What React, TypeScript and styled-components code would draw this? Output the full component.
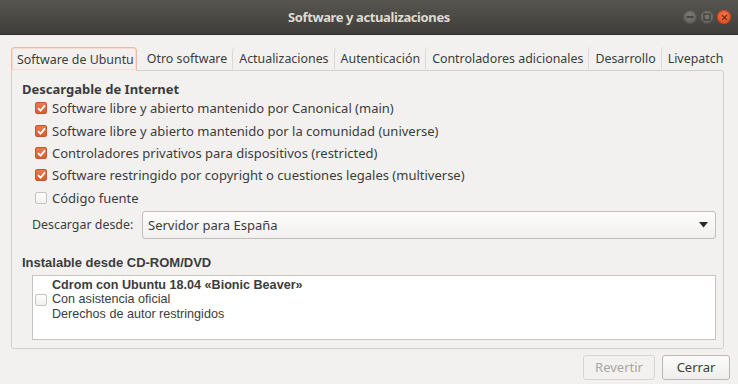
import React from "react";
import styled, { createGlobalStyle } from "styled-components";

const GlobalStyle = createGlobalStyle`
  html, body {
    margin: 0;
    padding: 0;
    background: #f2f1f0;
  }
  * {
    box-sizing: border-box;
  }
`;

const font = `"Noto Sans", "Open Sans", "DejaVu Sans", sans-serif`;
const narrowFont = `"Liberation Sans", Arial, sans-serif`;

const Window = styled.div`
  width: 738px;
  height: 384px;
  display: flex;
  flex-direction: column;
  background: #f2f1f0;
  font-family: ${font};
  font-size: 13px;
  color: #3c3c3c;
  overflow: hidden;
`;

const TitleBar = styled.div`
  height: 35px;
  flex: none;
  display: grid;
  grid-template-columns: 1fr auto 1fr;
  align-items: center;
  background: linear-gradient(to bottom, #57554f, #3f3e3a);
  border-bottom: 1px solid #2f2e2b;
  padding: 0 7px;
`;

const Title = styled.div`
  grid-column: 2;
  font-weight: 700;
  font-size: 13px;
  color: #dfdbd2;
  letter-spacing: -0.4px;
`;

const Controls = styled.div`
  grid-column: 3;
  justify-self: end;
  display: flex;
  gap: 3px;
`;

const CircleButton = styled.div<{ $close?: boolean }>`
  width: 14px;
  height: 14px;
  border-radius: 50%;
  display: flex;
  align-items: center;
  justify-content: center;
  background: ${({ $close }) =>
    $close
      ? "radial-gradient(circle at 50% 35%, #f2744a, #d9481a)"
      : "radial-gradient(circle at 50% 35%, #7a7873, #5d5c58)"};
  box-shadow: inset 0 0 0 1px ${({ $close }) => ($close ? "#c1431a" : "#4f4e4a")};
`;

const Body = styled.div`
  display: flex;
  flex-direction: column;
  padding: 11px 14px 0 11px;
`;

const TabRow = styled.div`
  display: flex;
  align-items: flex-end;
  height: 24px;
  position: relative;
  z-index: 1;
  font-size: 12.4px;
`;

const Tab = styled.div<{ $active?: boolean }>`
  height: ${({ $active }) => ($active ? "24px" : "22px")};
  display: flex;
  align-items: center;
  padding: ${({ $active }) => ($active ? "0 2px 0 5px" : "0 5px 0 6px")};
  margin-bottom: ${({ $active }) => ($active ? "-1px" : "1px")};
  white-space: nowrap;
  border: ${({ $active }) => ($active ? "1px solid #efb9a1" : "none")};
  border-bottom: ${({ $active }) => ($active ? "1px solid #f2f1f0" : "none")};
  border-radius: 4px 4px 0 0;
  background: #f2f1f0;
  box-shadow: ${({ $active }) => ($active ? "inset 0 0 0 1px #f7ddd1" : "none")};
  border-left: ${({ $active }) => ($active ? "1px solid #efb9a1" : "1px solid #dcd8d4")};
  &:nth-child(2) {
    border-left: none;
    margin-left: 4px;
  }
`;

const Panel = styled.div`
  height: 279px;
  border: 1px solid #d3cfcb;
  border-radius: 0 3px 3px 3px;
  padding: 9px 7px 0 10px;
  display: flex;
  flex-direction: column;
`;

const SectionTitle = styled.div<{ $narrow?: boolean }>`
  font-weight: 700;
  font-size: 13px;
  height: 18px;
  display: flex;
  align-items: center;
  font-family: ${({ $narrow }) => ($narrow ? narrowFont : font)};
`;

const CheckList = styled.div`
  display: flex;
  flex-direction: column;
  margin-top: -1px;
  padding-left: 13px;
`;

const CheckRow = styled.label`
  height: 22.4px;
  display: flex;
  align-items: center;
  gap: 5px;
`;

const Box = styled.span<{ $checked?: boolean }>`
  width: 12px;
  height: 12px;
  flex: none;
  border-radius: 2px;
  display: flex;
  align-items: center;
  justify-content: center;
  background: ${({ $checked }) =>
    $checked ? "linear-gradient(#ea7a4f, #db5d30)" : "linear-gradient(#ffffff, #f1f0ef)"};
  border: 1px solid ${({ $checked }) => ($checked ? "#c9542a" : "#c7c3bf")};
`;

const SourceRow = styled.div`
  display: flex;
  align-items: center;
  margin: 2px 0 0 10px;
`;

const SourceLabel = styled.span`
  width: 110px;
  flex: none;
  white-space: nowrap;
  font-size: 12.4px;
`;

const Combo = styled.div`
  flex: 1;
  height: 28px;
  border: 1px solid #c2beb9;
  border-radius: 3px;
  background: linear-gradient(#fcfcfc, #f1f0ef);
  display: flex;
  align-items: center;
  justify-content: space-between;
  padding: 0 7px 0 5px;
`;

const CdSection = styled.div`
  margin-top: 15px;
  display: flex;
  flex-direction: column;
`;

const CdBox = styled.div`
  margin: 3px 0 0 10px;
  height: 65px;
  background: #ffffff;
  border: 1px solid #c6c2bd;
  display: flex;
  align-items: flex-start;
  gap: 5px;
  padding: 2px 0 0 2px;
`;

const CdText = styled.div`
  display: flex;
  flex-direction: column;
  font-family: ${narrowFont};
  line-height: 14.5px;
  font-size: 12.6px;
`;

const CdBoxCell = styled.div`
  padding-top: 16px;
`;

const Footer = styled.div`
  flex: 1;
  display: flex;
  justify-content: flex-end;
  align-items: center;
  gap: 7px;
  padding: 1px 8px 0 0;
`;

const Button = styled.div<{ $disabled?: boolean }>`
  height: 25px;
  padding: 0 11px;
  min-width: 68px;
  display: flex;
  align-items: center;
  justify-content: center;
  border-radius: 3px;
  border: 1px solid ${({ $disabled }) => ($disabled ? "#d8d4d0" : "#bdb8b3")};
  background: ${({ $disabled }) =>
    $disabled ? "#f2f1f0" : "linear-gradient(#fbfbfb, #efeeed)"};
  color: ${({ $disabled }) => ($disabled ? "#a9a6a2" : "#3c3c3c")};
  font-size: 13px;
`;

const Check = () => (
  <svg width="9" height="8" viewBox="0 0 9 8">
    <path d="M1 4.2 L3.5 6.6 L8 1.3" fill="none" stroke="#ffffff" strokeWidth="1.8" />
  </svg>
);

const tabs = [
  "Software de Ubuntu",
  "Otro software",
  "Actualizaciones",
  "Autenticación",
  "Controladores adicionales",
  "Desarrollo",
  "Livepatch",
];

const sources: { label: string; checked: boolean }[] = [
  { label: "Software libre y abierto mantenido por Canonical (main)", checked: true },
  { label: "Software libre y abierto mantenido por la comunidad (universe)", checked: true },
  { label: "Controladores privativos para dispositivos (restricted)", checked: true },
  { label: "Software restringido por copyright o cuestiones legales (multiverse)", checked: true },
  { label: "Código fuente", checked: false },
];

export default function App() {
  return (
    <>
      <GlobalStyle />
      <Window>
        <TitleBar>
          <Title>Software y actualizaciones</Title>
          <Controls>
            <CircleButton>
              <svg width="8" height="8" viewBox="0 0 8 8">
                <rect x="0.5" y="3.2" width="7" height="1.6" fill="#3e3d39" />
              </svg>
            </CircleButton>
            <CircleButton>
              <svg width="8" height="8" viewBox="0 0 8 8">
                <rect x="1" y="1" width="6" height="6" fill="none" stroke="#3e3d39" strokeWidth="1.2" />
              </svg>
            </CircleButton>
            <CircleButton $close>
              <svg width="7" height="7" viewBox="0 0 7 7">
                <path d="M1 1 L6 6 M6 1 L1 6" stroke="#8a2a0c" strokeWidth="1.3" />
              </svg>
            </CircleButton>
          </Controls>
        </TitleBar>
        <Body>
          <TabRow>
            {tabs.map((t, i) => (
              <Tab key={t} $active={i === 0}>
                {t}
              </Tab>
            ))}
          </TabRow>
          <Panel>
            <SectionTitle>Descargable de Internet</SectionTitle>
            <CheckList>
              {sources.map((s) => (
                <CheckRow key={s.label}>
                  <Box $checked={s.checked}>{s.checked && <Check />}</Box>
                  {s.label}
                </CheckRow>
              ))}
            </CheckList>
            <SourceRow>
              <SourceLabel>Descargar desde:</SourceLabel>
              <Combo>
                <span>Servidor para España</span>
                <svg width="9" height="6" viewBox="0 0 9 6">
                  <path d="M0 0 L9 0 L4.5 5.5 Z" fill="#2b2b2b" />
                </svg>
              </Combo>
            </SourceRow>
            <CdSection>
              <SectionTitle $narrow>Instalable desde CD-ROM/DVD</SectionTitle>
              <CdBox>
                <CdBoxCell>
                  <Box />
                </CdBoxCell>
                <CdText>
                  <b>Cdrom con Ubuntu 18.04 «Bionic Beaver»</b>
                  <span>Con asistencia oficial</span>
                  <span>Derechos de autor restringidos</span>
                </CdText>
              </CdBox>
            </CdSection>
          </Panel>
        </Body>
        <Footer>
          <Button $disabled>Revertir</Button>
          <Button>Cerrar</Button>
        </Footer>
      </Window>
    </>
  );
}
